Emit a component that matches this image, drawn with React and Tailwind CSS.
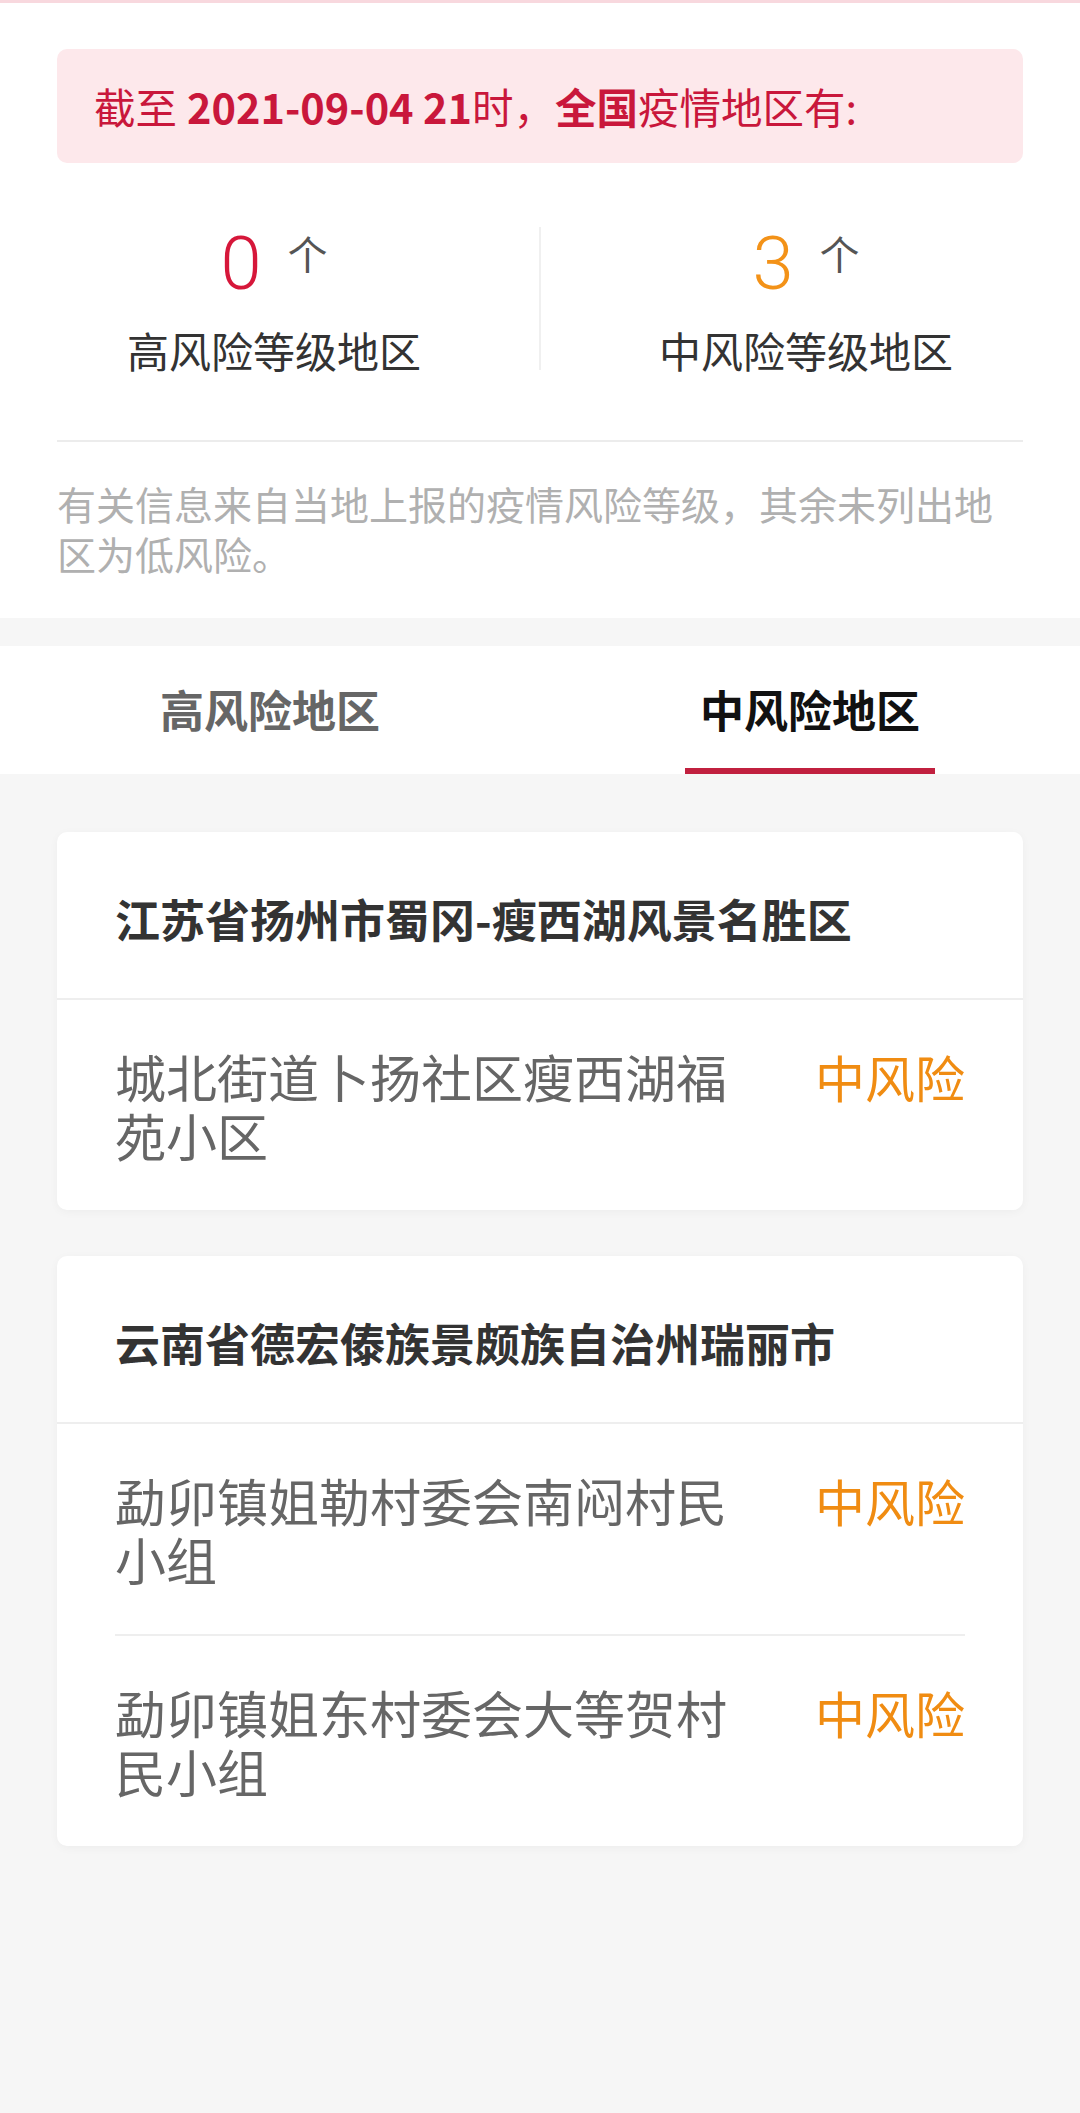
import React from "react";

const cjk = { fontFamily: '"Noto Sans CJK SC", "Noto Sans", sans-serif' };
const num = { fontFamily: 'Roboto, "Noto Sans CJK SC", sans-serif' };

function Card({ title, rows }) {
  return (
    <div className="bg-white rounded-[10px] shadow-[0_2px_10px_rgba(0,0,0,0.04)]">
      <div className="px-[58px] pt-[57px] pb-[49px] border-b-2 border-[#eeeeee] text-[45px] leading-[60px] font-bold text-[#333333]">
        {title}
      </div>
      {rows.map((r, i) => (
        <div key={i} className={i < rows.length - 1 ? "mx-[58px] border-b-2 border-[#eeeeee]" : "mx-[58px]"}>
          <div className="flex items-start pt-[47px] pb-[45px]">
            <div className="flex-1 text-[51px] leading-[59px] text-[#666666] pr-[70px]">{r}</div>
            <div className="shrink-0 text-[50px] leading-[59px] text-[#f08c12]">中风险</div>
          </div>
        </div>
      ))}
    </div>
  );
}

export default function App() {
  return (
    <div className="w-[1080px] min-h-[2113px] bg-[#f6f6f6]" style={cjk}>
      <div className="bg-white border-t-[3px] border-[#f8d8de]">
        <div className="px-[57px] pt-[46px]">
          <div className="h-[114px] rounded-[10px] bg-[#fde8eb] flex items-center pl-[37px] text-[41.5px] text-[#c9173b]">
            <span>截至 </span>
            <span className="font-bold ml-[10px]">2021-09-04 21</span>
            <span>时，</span>
            <span className="font-bold">全国</span>
            <span>疫情地区有:</span>
          </div>
        </div>
        <div className="grid grid-cols-2 relative mt-[64px] mx-[8px]">
          <div className="absolute left-[531px] top-0 w-[2px] h-[143px] bg-[#f0f0f0]"></div>
          <div className="flex flex-col items-center">
            <div className="flex items-start h-[80px]">
              <span className="text-[74px] leading-[74px] text-[#d6173a] font-light" style={num}>0</span>
              <span className="text-[40px] leading-[40px] text-[#555555] ml-[26px] mt-[6px]">个</span>
            </div>
            <div className="mt-[18px] text-[42px] leading-[50px] text-[#333333]">高风险等级地区</div>
          </div>
          <div className="flex flex-col items-center">
            <div className="flex items-start h-[80px]">
              <span className="text-[74px] leading-[74px] text-[#f39218] font-light" style={num}>3</span>
              <span className="text-[40px] leading-[40px] text-[#555555] ml-[26px] mt-[6px]">个</span>
            </div>
            <div className="mt-[18px] text-[42px] leading-[50px] text-[#333333]">中风险等级地区</div>
          </div>
        </div>
        <div className="mx-[57px] mt-[65px] border-t-2 border-[#ececec]"></div>
        <div className="px-[57px] pt-[36px] pb-[40px] text-[39px] leading-[50px] text-[#b0b0b0]">
          有关信息来自当地上报的疫情风险等级，其余未列出地区为低风险。
        </div>
      </div>
      <div className="h-[28px]"></div>
      <div className="bg-white h-[128px] grid grid-cols-2">
        <div className="flex flex-col items-center justify-end">
          <span className="text-[44px] font-bold text-[#666666] mb-[26px]">高风险地区</span>
          <div className="w-[250px] h-[6px]"></div>
        </div>
        <div className="flex flex-col items-center justify-end">
          <span className="text-[44px] font-bold text-[#111111] mb-[26px]">中风险地区</span>
          <div className="w-[250px] h-[6px] bg-[#c1203f]"></div>
        </div>
      </div>
      <div className="px-[57px] pt-[58px] flex flex-col gap-[46px]">
        <Card title="江苏省扬州市蜀冈-瘦西湖风景名胜区" rows={["城北街道卜扬社区瘦西湖福苑小区"]} />
        <Card
          title="云南省德宏傣族景颇族自治州瑞丽市"
          rows={["勐卯镇姐勒村委会南闷村民小组", "勐卯镇姐东村委会大等贺村民小组"]}
        />
      </div>
    </div>
  );
}
